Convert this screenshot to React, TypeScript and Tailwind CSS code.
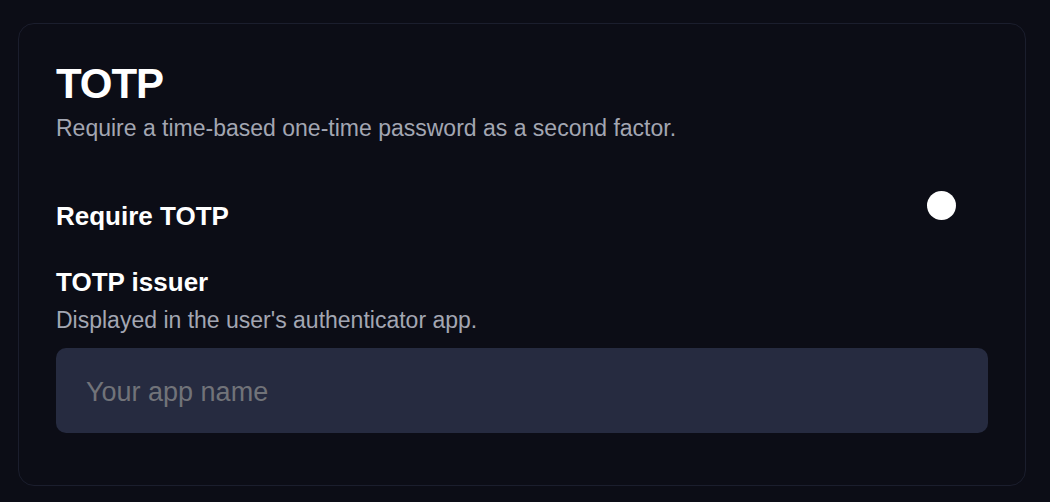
import { useState } from "react";

const TotpCard = () => {
  const [enabled, setEnabled] = useState(false);
  const [issuer, setIssuer] = useState("");

  return (
    <div className="ml-[18px] mt-[23px] w-[1008px] rounded-[16px] border border-[#1b1e2d] bg-[#0c0d16] px-[37px] pt-[36px] pb-[52px]">
      <h2 className="text-[42px] leading-[48px] font-bold tracking-tight text-white">
        TOTP
      </h2>
      <p className="mt-[6px] text-[23px] leading-[28px] text-[#a3a6b2]">
        Require a time-based one-time password as a second factor.
      </p>

      <div className="mt-[58px] flex items-start justify-between">
        <span className="text-[26px] leading-[32px] font-bold text-white">
          Require TOTP
        </span>
        <button
          type="button"
          role="switch"
          aria-checked={enabled}
          onClick={() => setEnabled((prev) => !prev)}
          className="-mt-[9px] mr-[32px] flex h-[29px] w-[29px] items-center"
        >
          <span className="block h-[29px] w-[29px] rounded-full bg-white" />
        </button>
      </div>

      <div className="mt-[34px] text-[26px] leading-[32px] font-bold text-white">
        TOTP issuer
      </div>
      <p className="mt-[8px] text-[23px] leading-[28px] text-[#a3a6b2]">
        Displayed in the user's authenticator app.
      </p>
      <input
        value={issuer}
        onChange={(e) => setIssuer(e.target.value)}
        placeholder="Your app name"
        className="mt-[14px] h-[85px] w-full rounded-[10px] bg-[#262b40] px-[30px] pt-[3px] text-[27px] text-white outline-none placeholder:text-[#717379]"
      />
    </div>
  );
};

export default function App() {
  return (
    <div
      className="min-h-[502px] w-[1050px] overflow-hidden bg-[#0c0d16] pt-px"
      style={{ fontFamily: '"Liberation Sans", Arial, sans-serif' }}
    >
      <div className="-mt-px">
        <TotpCard />
      </div>
    </div>
  );
}
